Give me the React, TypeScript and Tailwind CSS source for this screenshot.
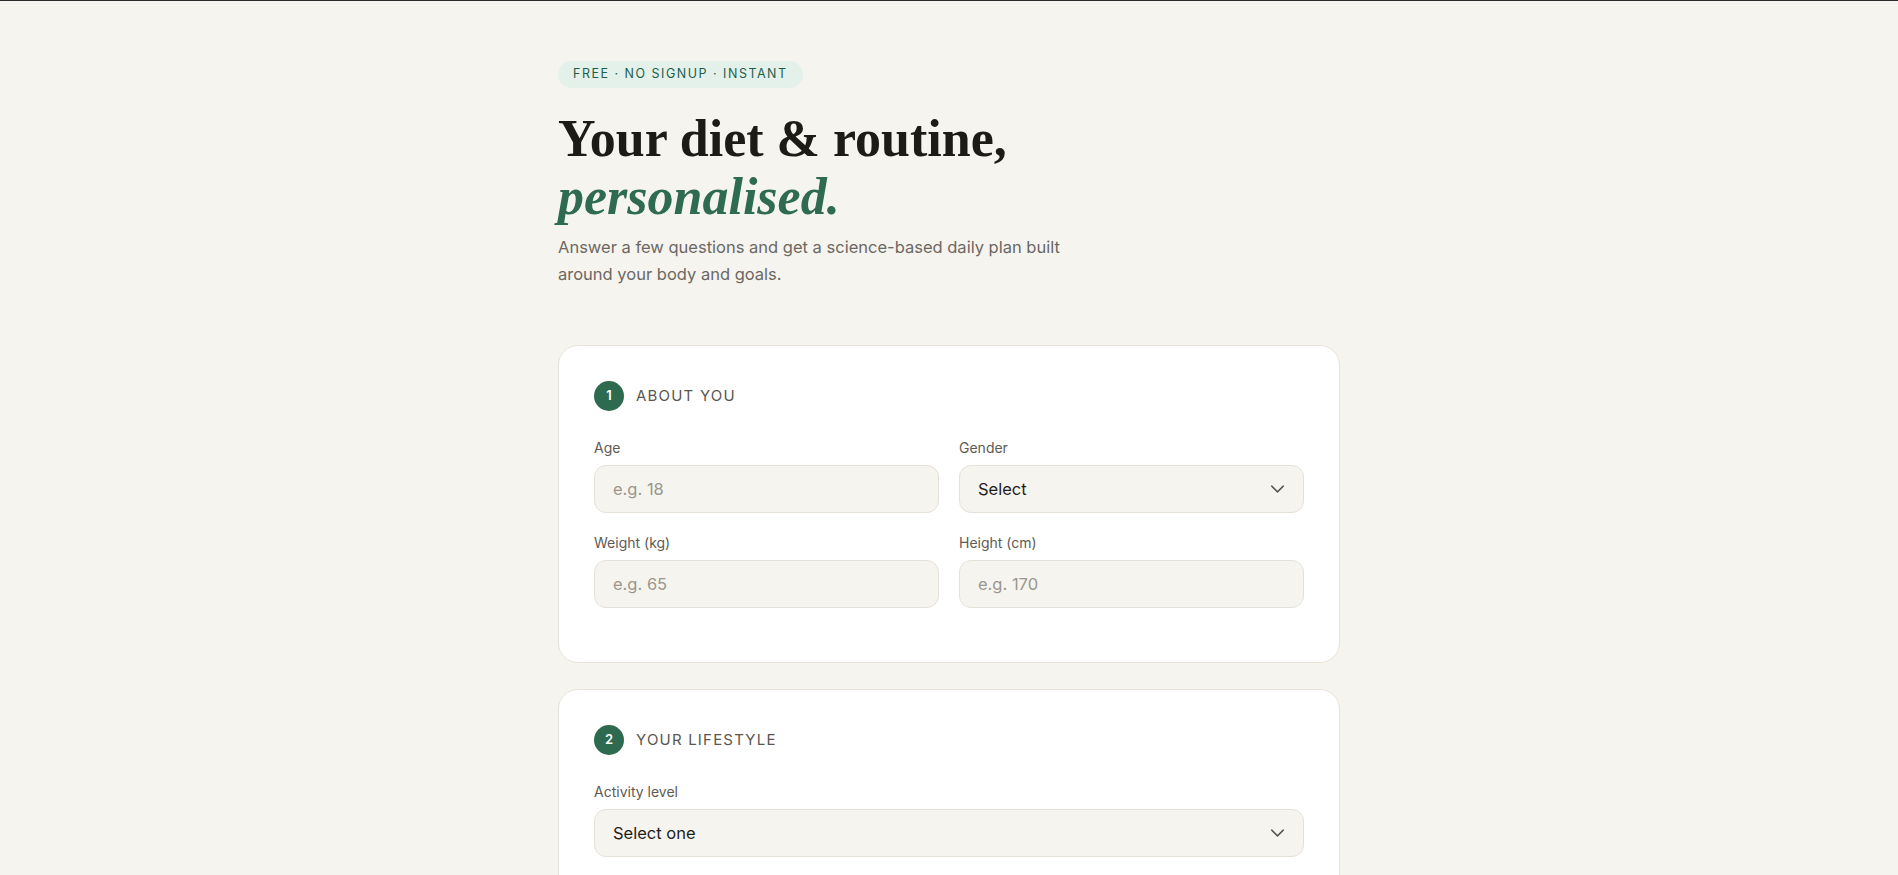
import { ChevronDown } from "lucide-react";

const serif = { fontFamily: '"Liberation Serif", "DejaVu Serif", serif' };

function Field({ label, placeholder, select }: { label: string; placeholder: string; select?: boolean }) {
  return (
    <div className="flex flex-col">
      <label className="text-[14px] leading-[18px] text-[#5e5a54] mb-[8px]">{label}</label>
      <div className="relative h-[48px] rounded-[12px] border border-[#e5e1d8] bg-[#f6f4ef] flex items-center px-[18px]">
        {select ? (
          <>
            <span className="text-[16.5px] text-[#1f1e1b]">{placeholder}</span>
            <ChevronDown className="absolute right-[14px] top-1/2 -translate-y-1/2 text-[#5a5752]" size={23} strokeWidth={1.5} />
          </>
        ) : (
          <input
            type="text"
            placeholder={placeholder}
            className="w-full bg-transparent outline-none text-[16.5px] text-[#1f1e1b] placeholder:text-[#9b968d]"
          />
        )}
      </div>
    </div>
  );
}

function SectionHead({ n, title }: { n: number; title: string }) {
  return (
    <div className="flex items-center gap-[12px]">
      <div className="w-[30px] h-[30px] rounded-full bg-[#2d6a4f] text-white text-[13px] font-semibold flex items-center justify-center">
        {n}
      </div>
      <h2 className="text-[15px] tracking-[0.08em] font-normal text-[#5b564f] uppercase">{title}</h2>
    </div>
  );
}

export default function App() {
  return (
    <div
      className="min-h-screen bg-[#f6f4ef] border-t border-[#2b2b2b]"
      style={{ fontFamily: 'Inter, "Liberation Sans", sans-serif' }}
    >
      <main className="mx-auto w-[782px] pt-[59px] pb-16">
        {/* Hero */}
        <span className="inline-flex items-center h-[27px] px-[15px] rounded-full bg-[#e3f1ea] text-[12.5px] font-normal tracking-[0.12em] text-[#1f5e4a]">
          FREE · NO SIGNUP · INSTANT
        </span>
        <h1 className="mt-[22px] text-[52px] leading-[58px] font-bold text-[#1c1b18]" style={serif}>
          Your diet &amp; routine,
          <br />
          <em className="text-[#2e6b50]">personalised.</em>
        </h1>
        <p className="mt-[8px] text-[16.5px] leading-[27px] text-[#6b6862] max-w-[520px]">
          Answer a few questions and get a science-based daily plan built around your body and goals.
        </p>

        {/* Steps */}
        <div className="mt-[57px] flex flex-col gap-[26px]">
          <section className="bg-white rounded-[20px] border border-[#e7e3da] px-[35px] pt-[35px] pb-[54px]">
            <SectionHead n={1} title="About you" />
            <div className="mt-[28px] grid grid-cols-2 gap-x-[20px] gap-y-[21px]">
              <Field label="Age" placeholder="e.g. 18" />
              <Field label="Gender" placeholder="Select" select />
              <Field label="Weight (kg)" placeholder="e.g. 65" />
              <Field label="Height (cm)" placeholder="e.g. 170" />
            </div>
          </section>

          <section className="bg-white rounded-[20px] border border-[#e7e3da] px-[35px] pt-[35px] pb-[54px]">
            <SectionHead n={2} title="Your lifestyle" />
            <div className="mt-[28px] flex flex-col gap-[21px]">
              <Field label="Activity level" placeholder="Select one" select />
            </div>
          </section>
        </div>
      </main>
    </div>
  );
}
